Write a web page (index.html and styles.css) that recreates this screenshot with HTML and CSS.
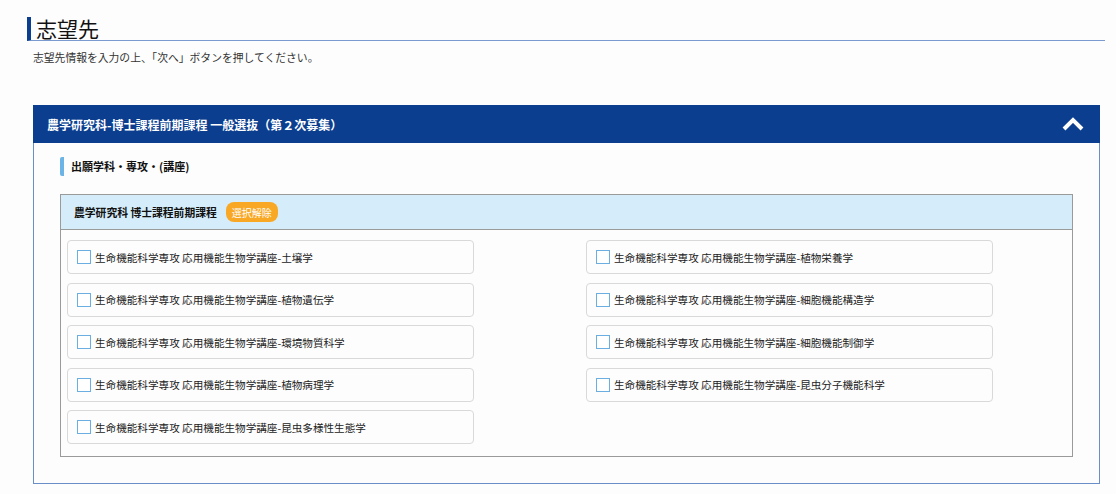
FILE: index.html
```html
<!DOCTYPE html>
<html lang="ja">

<head>
  <meta charset="UTF-8">
  <meta name="viewport" content="width=device-width, initial-scale=1.0">
  <title>志望先</title>
  <link rel="stylesheet" href="styles.css">
</head>

<body>
  <div class="page">
    <h1 class="page-title">志望先</h1>
    <p class="lead">志望先情報を入力の上、「次へ」ボタンを押してください。</p>

    <div class="panel">
      <div class="panel-header">
        <span class="panel-title">農学研究科-博士課程前期課程 一般選抜（第２次募集）</span>
        <svg class="chevron" width="22" height="16" viewBox="0 0 22 16">
          <polyline points="2,13 11,4 20,13" fill="none" stroke="#fff" stroke-width="4" />
        </svg>
      </div>

      <div class="panel-body">
        <h3 class="section-label">出願学科・専攻・(講座)</h3>

        <div class="course-box">
          <div class="course-header">
            <span>農学研究科 博士課程前期課程</span>
            <button class="btn-clear" type="button">選択解除</button>
          </div>

          <!-- course choices -->
          <div class="choices">
            <label class="choice"><span class="check"></span>生命機能科学専攻 応用機能生物学講座-土壌学</label>
            <label class="choice"><span class="check"></span>生命機能科学専攻 応用機能生物学講座-植物栄養学</label>
            <label class="choice"><span class="check"></span>生命機能科学専攻 応用機能生物学講座-植物遺伝学</label>
            <label class="choice"><span class="check"></span>生命機能科学専攻 応用機能生物学講座-細胞機能構造学</label>
            <label class="choice"><span class="check"></span>生命機能科学専攻 応用機能生物学講座-環境物質科学</label>
            <label class="choice"><span class="check"></span>生命機能科学専攻 応用機能生物学講座-細胞機能制御学</label>
            <label class="choice"><span class="check"></span>生命機能科学専攻 応用機能生物学講座-植物病理学</label>
            <label class="choice"><span class="check"></span>生命機能科学専攻 応用機能生物学講座-昆虫分子機能科学</label>
            <label class="choice"><span class="check"></span>生命機能科学専攻 応用機能生物学講座-昆虫多様性生態学</label>
          </div>
        </div>
      </div>
    </div>
  </div>
</body>

</html>
```

FILE: styles.css
```css
* {
  margin: 0;
  padding: 0;
  box-sizing: border-box;
}

body {
  font-family: "Noto Sans CJK JP", "Noto Sans", sans-serif;
  background: #fdfdfd;
  color: #222;
}

.page {
  padding: 17px 11px 0 27px;
}

.page-title {
  font-size: 21px;
  font-weight: normal;
  line-height: 22px;
  color: #111;
  border-left: 4px solid #0b3e8f;
  border-bottom: 1px solid #7b9bd0;
  padding-left: 5px;
  height: 24px;
}

.lead {
  font-size: 10.8px;
  line-height: 16px;
  margin-top: 8px;
  padding-left: 6px;
  color: #333;
}

.panel {
  margin: 40px 5px 0 6px;
}

.panel-header {
  background: #0b3e8f;
  height: 38px;
  display: flex;
  align-items: center;
  justify-content: space-between;
  padding: 0 16px 0 14px;
}

.panel-title {
  color: #fff;
  font-size: 12px;
  font-weight: bold;
}

.chevron {
  display: block;
}

.panel-body {
  border: 1px solid #6a8ec8;
  border-top: none;
  padding: 14px 26px 26px 26px;
}

.section-label {
  font-size: 11px;
  font-weight: bold;
  line-height: 19px;
  border-left: 4px solid #6cb4e6;
  border-radius: 2px;
  padding-left: 7px;
  margin-bottom: 18px;
  color: #111;
}

.course-box {
  border: 1px solid #9a9a9a;
  padding-bottom: 12px;
}

.course-header {
  background: #d5edfb;
  border-bottom: 1px solid #9a9a9a;
  height: 35px;
  display: flex;
  align-items: center;
  gap: 9px;
  padding-left: 13px;
  font-size: 10.8px;
  font-weight: bold;
  color: #111;
}

.btn-clear {
  background: #f9a826;
  color: #fff;
  border: none;
  border-radius: 8px;
  font-family: inherit;
  font-size: 10px;
  height: 20px;
  width: 52px;
}

.choices {
  display: grid;
  grid-template-columns: 407px 407px;
  column-gap: 112px;
  row-gap: 8.5px;
  padding: 10px 0 0 6px;
}

.choice {
  height: 34px;
  border: 1px solid #d9d9d9;
  border-radius: 4px;
  display: flex;
  align-items: center;
  padding-left: 9px;
  font-size: 10.6px;
  color: #222;
}

.check {
  width: 14px;
  height: 14px;
  border: 1px solid #6aaee2;
  background: #fff;
  margin-right: 4px;
  flex-shrink: 0;
}
```
